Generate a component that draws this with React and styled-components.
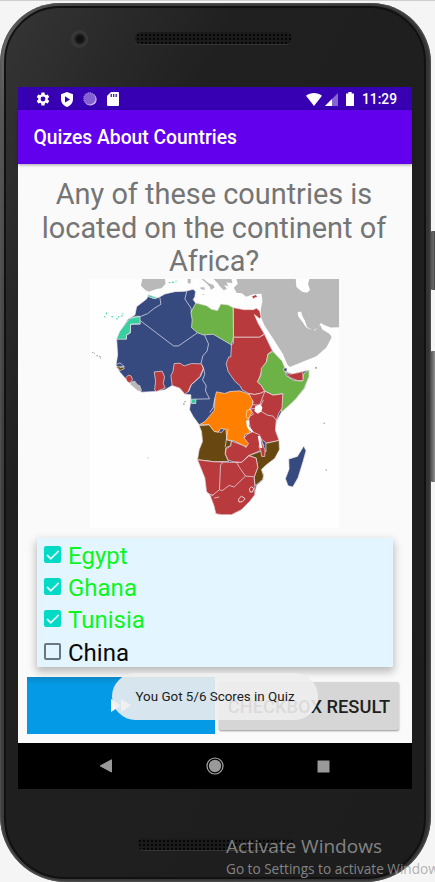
import React from "react";
import styled, { createGlobalStyle } from "styled-components";

const Global = createGlobalStyle`
  * { box-sizing: border-box; }
  html, body { margin: 0; padding: 0; overflow: hidden; background: #f5f5f5; }
  body { font-family: Roboto, "Liberation Sans", sans-serif; }
  svg { display: block; }
`;

const Desktop = styled.main`
  position: relative;
  width: 435px;
  height: 882px;
  overflow: hidden;
  padding-top: 2px;
  background: #f5f5f5;
  border-top: 1px solid #cfcfcf;
`;

const Phone = styled.div`
  position: relative;
  width: 431px;
  height: 879px;
  padding: 3px 5px 3px 4px;
  border-radius: 60px 60px 66px 66px;
  background: linear-gradient(100deg, #777 0%, #555 4%, #3c3c3c 15%, #303030 100%);
  box-shadow: inset 0 0 2px 1px #555;
`;

const SideKey = styled.div`
  position: absolute;
  left: 431px;
  top: ${(p) => p.$top}px;
  width: 5px;
  height: ${(p) => p.$height}px;
  background: linear-gradient(90deg, #555, ${(p) => p.$tone} 50%, ${(p) => p.$edge});
  border-radius: 1px;
`;

const Face = styled.div`
  height: 100%;
  display: flex;
  flex-direction: column;
  padding: 0 12px;
  border: 2px solid #111;
  border-radius: 56px 56px 61px 61px;
  background: linear-gradient(115deg, #353536 0%, #2a2a2a 14%, #202020 28%, #1d1d1d 100%);
`;

const Forehead = styled.header`
  height: 79px;
  flex: none;
  display: flex;
  align-items: flex-start;
  padding: 22px 0 0 53px;
  gap: 47px;
`;

const Camera = styled.div`
  width: 18px;
  height: 18px;
  margin-left: -1px;
  border-radius: 50%;
  background: radial-gradient(circle at 55% 50%, #111 0 3px, #29252a 5px, #3b393c 7px, #333 9px);
`;

const Speaker = styled.div`
  width: 157px;
  height: 13px;
  border-radius: 7px;
  background: radial-gradient(circle, #050505 0.9px, transparent 1.2px) 1px 1px / 4px 4px, #1b1b1b;
  border-bottom: 1px solid #353535;
  flex: none;
`;

const TopSpeaker = styled(Speaker)`
  margin-top: 2px;
`;

const Screen = styled.section`
  position: relative;
  width: 394px;
  height: 702px;
  flex: none;
  display: flex;
  flex-direction: column;
  background: #fafafa;
`;

const StatusBar = styled.div`
  height: 23px;
  flex: none;
  display: flex;
  align-items: center;
  justify-content: space-between;
  padding: 1px 15px 0 17px;
  background: #3700b3;
  color: #fff;
`;

const StatusGroup = styled.div`
  display: flex;
  align-items: center;
  gap: ${(p) => p.$gap}px;
`;

const Battery = styled.div`
  margin-left: 5px;
`;

const Clock = styled.time`
  font-size: 13.8px;
  font-weight: 500;
  margin-left: 5px;
  line-height: 20px;
`;

const AppBar = styled.h1`
  margin: 0;
  height: 54px;
  flex: none;
  padding-left: 15.5px;
  font-size: 19.3px;
  font-weight: 500;
  line-height: 55px;
  color: #fff;
  background: #6200ee;
  box-shadow: 0 1px 3px rgba(0, 0, 0, 0.35);
`;

const Content = styled.div`
  height: 579px;
  flex: none;
  display: flex;
  flex-direction: column;
  padding: 14px 13px 0 9px;
`;

const Question = styled.h2`
  margin: 0 0 0 2px;
  height: 101px;
  text-align: center;
  font-size: 28.9px;
  font-weight: 400;
  line-height: 33.5px;
  color: #757575;
  white-space: nowrap;
`;

const MapFrame = styled.figure`
  margin: 0 0 0 63px;
  width: 249px;
  height: 249px;
  background: #fefefe;
`;

const Options = styled.div`
  margin: 10px 6px 0 10px;
  height: 129px;
  flex: none;
  border-radius: 1px;
  background: #e3f5ff;
  box-shadow: 0 4px 9px 1px rgba(0, 0, 0, 0.26);
`;

const Option = styled.label`
  display: flex;
  align-items: center;
  gap: 7px;
  height: 32.2px;
  padding: 4px 0 0 7px;
  font-size: 24px;
  line-height: 28px;
  color: ${(p) => (p.$right ? "#0cf51c" : "#080808")};
`;

const Tick = styled.span`
  width: 17px;
  height: 17px;
  margin-top: -3px;
  border-radius: 2px;
  border: 2px solid ${(p) => (p.$on ? "#03dac5" : "#6b7780")};
  background: ${(p) => (p.$on ? "#03dac5" : "transparent")};
  display: grid;
  place-items: center;
`;

const Actions = styled.div`
  display: flex;
  align-items: flex-start;
  margin-top: 10px;
  gap: 4px;
`;

const NextButton = styled.button`
  width: 188px;
  height: 57px;
  border: 0;
  padding: 0;
  display: grid;
  place-items: center;
  background: linear-gradient(#0c87c7 0, #049ae6 7px);
`;

const ResultButton = styled.button`
  width: 180px;
  height: 48px;
  margin-top: 5px;
  padding: 0;
  border: 0;
  border-radius: 2px;
  font: 500 18.3px Roboto, sans-serif;
  line-height: 49px;
  color: #1f1f1f;
  white-space: nowrap;
  background: #d6d6d6;
  box-shadow: 0 1px 2px rgba(0, 0, 0, 0.4);
`;

const Toast = styled.div`
  position: absolute;
  left: 94px;
  top: 586px;
  width: 206px;
  height: 47px;
  border-radius: 24px;
  text-align: center;
  font-size: 13.4px;
  line-height: 48px;
  color: #202020;
  background: rgba(238, 238, 238, 0.9);
`;

const NavBar = styled.nav`
  height: 46px;
  flex: none;
  display: flex;
  align-items: center;
  justify-content: space-between;
  padding: 0 82px 0 81px;
  background: #000;
`;

const Chin = styled.footer`
  padding: 49px 0 0 119px;
`;

const Watermark = styled.aside`
  position: absolute;
  left: 226px;
  top: 833px;
  white-space: nowrap;
  color: rgba(160, 160, 160, 0.8);
  font-family: "Open Sans", "Noto Sans", sans-serif;
`;

const WatermarkTitle = styled.div`
  font-size: 19px;
  line-height: 25px;
`;

const WatermarkText = styled.div`
  font-size: 13.6px;
  line-height: 20px;
`;

const NAVY = "#364a80";
const RED = "#b93a3c";
const GREEN = "#6cb247";
const BROWN = "#684711";
const ORANGE = "#ff7f00";
const MINT = "#35cfa0";
const GREY = "#b9b9b9";

const regions = [
  [GREY, "M172 12L168 32L181 45L192 50L215 42L230 40L242 26L240 12Z"],
  [GREY, "M308 12L318 12L317 26L309 24Z M344 38L358 36L360 45L350 43Z M356 12L372 25L386 30L389 38L378 44L375 36L365 25L350 12Z"],
  [GREY, "M386 12L398 24L405 34L417 46L426 42L418 30L430 34L425 22L443 25L440 12Z"],
  [GREY, "M455 12L763 12L763 157L738 158L720 151L708 144L702 157L686 166L667 156L661 138L653 123L649 110L639 112L640 124L654 142L663 156L669 160L690 167L707 151L713 164L735 177L741 187L725 218L695 244L615 276L607 268L595 238L565 191L540 153L529 128L528 103L533 79L530 56L506 58L484 65L470 54L456 54L447 38L459 26Z"],
  [NAVY, "M190 62L204 70L220 68L240 57L270 50L300 49L325 43L332 50L330 65L325 74L333 85L345 87L365 92L380 103L398 107L408 88L430 90L445 98L478 104L500 104L505 120L520 145L540 178L555 210L565 230L590 262L600 282L608 292L622 297L654 290L673 285L672 305L660 340L635 370L615 390L590 412L575 440L572 465L582 497L584 525L565 550L540 570L530 585L537 600L535 615L515 633L510 660L495 680L470 705L440 720L410 720L393 717L388 695L375 660L365 650L360 610L338 555L343 525L353 500L350 470L343 450L325 425L314 405L318 375L318 360L300 358L285 340L262 332L240 345L210 350L170 352L150 335L125 315L105 292L93 270L98 240L95 192L105 170L130 132L150 120L155 95L185 72Z"],
  [GREEN, "M333 84L345 87L365 92L380 103L398 107L408 87L430 90L445 98L446 185L440 210L385 178L355 180L337 173L320 158L322 135L318 112Z"],
  [RED, "M446 98L478 104L505 104L515 100L525 108L529 127L524 131L509 119L520 145L539 178L532 181L524 187L446 187Z"],
  [RED, "M446 187L524 187L539 178L563 228L550 237L545 261L533 282L523 310L518 321L530 332L540 349L528 355L510 359L492 356L472 345L466 333L450 319L430 290L424 266L432 246L438 246L440 210L446 205Z"],
  [GREEN, "M565 230L592 258L602 282L604 302L625 316L652 319L658 295L673 285L673 305L658 340L635 370L615 390L590 412L590 382L594 356L565 361L539 348L530 332L518 321L528 303L530 280L545 261L550 237Z"],
  [RED, "M602 290L615 298L633 295L654 290L655 317L638 317L613 307Z"],
  [RED, "M262 332L258 302L264 291L268 266L285 265L298 273L320 266L350 267L356 280L345 305L331 319L318 330L312 349L300 358L285 340Z"],
  [RED, "M208 291L232 289L239 306L235 326L241 339L215 350L209 345L212 320Z M122 309L130 301L138 303L143 313L135 325L126 319Z"],
  [GREY, "M140 319L150 318L158 328L166 332L172 350L158 347L145 336L136 328Z"],
  [BROWN, "M94 276L115 275L118 281L106 287Z"],
  [MINT, "M135 130L155 124L165 124L166 147L137 148L136 174L125 180L124 193L95 193L104 170Z M188 58L208 65L217 68L210 71L192 66Z M320 373L333 373L333 386L320 386Z"],
  [BROWN, "M343 453L373 450L390 470L411 473L421 460L432 461L426 495L440 499L438 512L423 519L421 537L431 560L385 561L370 558L338 555L343 525L353 500L350 470Z"],
  [ORANGE, "M390 370L395 351L420 356L435 350L465 348L492 358L503 370L504 390L494 402L490 435L489 455L496 475L481 478L478 489L492 505L490 518L475 512L450 499L426 495L423 463L408 461L400 472L388 470L372 449L343 450L360 440L373 425L388 407Z"],
  [RED, "M492 356L510 359L528 355L540 349L565 361L594 357L592 400L582 415L574 440L572 467L583 497L545 505L526 490L510 480L498 467L492 435L497 404L506 382Z"],
  [RED, "M488 478L503 471L524 480L529 496L537 512L526 528L495 541L470 563L445 561L430 556L422 538L424 522L438 513L440 499L475 512L484 518L491 506L478 490Z"],
  [BROWN, "M524 531L544 530L543 506L583 497L584 525L570 551L545 570L530 584L536 604L533 615L511 633L508 607L519 578L514 550L492 543Z"],
  [RED, "M527 488L533 508L541 526L540 545L531 545L528 528L523 517Z"],
  [RED, "M338 555L385 561L445 563L470 563L492 543L514 550L519 578L508 607L510 633L510 660L495 680L470 705L440 720L410 720L393 717L388 695L375 660L365 650L360 610Z"],
  [NAVY, "M657 514L664 528L655 560L640 609L624 637L610 633L602 612L613 583L612 553L638 545Z M597 280L607 279L606 290L597 289Z"],
  [RED, "M501 64L513 59L518 65L505 71Z"],
];

const borders =
  "M225 68L228 88L208 100L188 116L166 125 M166 137L266 213L281 213L337 174 M306 48L300 72L318 99L320 112 M359 180L371 207L367 228L354 243L348 267 M356 280L360 298L353 315L364 332L362 348L374 372L332 373 M352 271L356 282L347 305L320 329L310 350 M166 125L135 130 M166 147L137 148L136 174L125 180L124 193 M504 390L525 390L540 350 M496 403L525 398L536 375 M528 409L548 421L565 424L577 439 M497 404L506 418L493 426 M415 562L407 571L404 645L380 664 M385 662L365 655 M404 645L412 648L433 632L448 637L482 604L507 606 M455 562L462 575L482 604 M492 543L470 563 M388 670L403 667 M421 517L430 461 M375 413L385 398L390 370 M94 269L105 264L118 275L104 279";

const specks =
  "M57 124h4v3h-4z M63 113h3v5h-3z M79 124h6v3h-6z M94 130h4v4h-4z M99 124h4v4h-4z M109 121h4v4h-4z M112 115h3v3h-3z M252 21h4v3h-4z M260 20h8v3h-8z M272 17h3v3h-3z";

const darkSpecks =
  "M22 232h3v2h-3z M28 235h2v2h-2z M35 241h3v3h-3z M42 243h5v2h-5z M45 248h2v3h-2z M717 444h3v3h-3z M723 584h3v3h-3z M692 277h4v4h-4z M354 57h2v2h-2z M299 379h3v3h-3z M295 386h4v3h-4z";

function AfricaMap() {
  return (
    <svg width="249" height="249" viewBox="15 12 748 748" role="img" aria-label="Map of Africa">
      {regions.map(([fill, d], i) => (
        <path
          key={i}
          d={d}
          fill={fill}
          stroke={fill === GREY ? "none" : "#f4e9ea"}
          strokeWidth="2"
          strokeLinejoin="round"
        />
      ))}
      <path d={borders} fill="none" stroke="#e2dfea" strokeWidth="2.2" strokeLinejoin="round" />
      <path d="M633 12L674 12L670 27L676 45L667 53L652 50L635 36Z" fill="#fefefe" />
      <path d="M511 394L527 388L533 398L530 410L519 417L509 409Z M484 437L493 436L493 454L506 470L500 473L486 456Z M519 484L526 484L529 504L533 520L525 519Z" fill="#fefefe" />
      <path d="M486 407L498 404L500 416L491 431L484 427Z" fill={ORANGE} stroke="#fff" strokeWidth="1.6" />
      <path d="M461 674L470 664L481 672L472 681L463 682Z M494 642L500 636L507 641L503 652L496 652Z" fill={RED} stroke="#fff" strokeWidth="2.4" />
      <path d={specks} fill={MINT} />
      <path d={darkSpecks} fill="#665650" />
      <circle cx="189" cy="549" r="3" fill="#ddd" />
    </svg>
  );
}

const GearIcon = () => (
  <svg width="16" height="16" viewBox="0 0 24 24" fill="#fff">
    <path d="M19.14 12.94c.04-.3.06-.61.06-.94 0-.32-.02-.64-.07-.94l2.03-1.58c.18-.14.23-.41.12-.61l-1.92-3.32c-.12-.22-.37-.29-.59-.22l-2.39.96c-.5-.38-1.03-.7-1.62-.94L14.4 2.81c-.04-.24-.24-.41-.48-.41h-3.84c-.24 0-.43.17-.47.41L9.25 5.35c-.59.24-1.13.57-1.62.94L5.24 5.33c-.22-.08-.47 0-.59.22L2.74 8.87c-.12.21-.08.47.12.61l2.03 1.58c-.05.3-.09.63-.09.94s.02.64.07.94l-2.03 1.58c-.18.14-.23.41-.12.61l1.92 3.32c.12.22.37.29.59.22l2.39-.96c.5.38 1.03.7 1.62.94l.36 2.54c.05.24.24.41.48.41h3.84c.24 0 .44-.17.47-.41l.36-2.54c.59-.24 1.13-.56 1.62-.94l2.39.96c.22.08.47 0 .59-.22l1.92-3.32c.12-.22.07-.47-.12-.61l-2.01-1.58zM12 15.6A3.6 3.6 0 1 1 12 8.4a3.6 3.6 0 0 1 0 7.2z" />
  </svg>
);

const ShieldIcon = () => (
  <svg width="12" height="15" viewBox="0 0 12 15">
    <path d="M6 0L12 2.2V7C12 11 9.3 13.8 6 15C2.7 13.8 0 11 0 7V2.2Z" fill="#fff" />
    <path d="M4 4.3L9 7.4L4 10.5Z" fill="#3700b3" />
  </svg>
);

const SyncIcon = () => (
  <svg width="14" height="14" viewBox="0 0 14 14">
    <circle cx="7.4" cy="7.4" r="6.2" fill="#d8c9f5" />
    <circle cx="6.6" cy="6.6" r="6" fill="#8460d2" stroke="#a58be0" strokeDasharray="1 1" />
  </svg>
);

const CardIcon = () => (
  <svg width="12" height="14" viewBox="0 0 12 14">
    <path d="M4 0H11Q12 0 12 1V13Q12 14 11 14H1Q0 14 0 13V4Z" fill="#fff" />
    <path d="M4.2 2V5M6.7 2V5M9.2 2V5" stroke="#3700b3" strokeWidth="1.2" />
  </svg>
);

const WifiIcon = () => (
  <svg width="16" height="13" viewBox="0 0 16 13">
    <path d="M0 2.8C4.7 -.9 11.3 -.9 16 2.8L8 13Z" fill="#fff" />
  </svg>
);

const SignalIcon = () => (
  <svg width="13" height="13" viewBox="0 0 13 13">
    <path d="M13 0V13H0Z" fill="#8765d1" />
    <path d="M7 6V13H0Z" fill="#fff" />
  </svg>
);

const BatteryIcon = () => (
  <svg width="8" height="14" viewBox="0 0 8 14">
    <path d="M2.3 0H5.7V1.4H8V14H0V1.4H2.3Z" fill="#fff" />
  </svg>
);

const CheckMark = () => (
  <svg width="14" height="12" viewBox="0 0 14 12">
    <path d="M1 6L4.8 9.8L12.7 1.8" fill="none" stroke="#e5faff" strokeWidth="1.8" />
  </svg>
);

const ForwardIcon = () => (
  <svg width="20" height="13" viewBox="0 0 20 13">
    <path d="M0 0L10 6.5L0 13Z M10 0L20 6.5L10 13Z" fill="#fff" />
  </svg>
);

const BackIcon = () => (
  <svg width="14" height="14" viewBox="0 0 14 14">
    <path d="M12.5 .8V13L1.2 6.9Z" fill="#999" stroke="#999" strokeLinejoin="round" />
  </svg>
);

const HomeIcon = () => (
  <svg width="18" height="18" viewBox="0 0 18 18">
    <circle cx="9" cy="9" r="8" fill="none" stroke="#aaa" strokeWidth="1.2" />
    <circle cx="9" cy="9" r="6.2" fill="#999" />
  </svg>
);

const RecentIcon = () => (
  <svg width="13" height="13" viewBox="0 0 13 13">
    <rect x=".5" y=".5" width="12" height="12" rx=".5" fill="#999" />
  </svg>
);

const answers = [
  { name: "Egypt", on: true },
  { name: "Ghana", on: true },
  { name: "Tunisia", on: true },
  { name: "China", on: false },
];

export default function App() {
  return (
    <>
      <Global />
      <Desktop>
        <SideKey $top={230} $height={59} $tone="#666" $edge="#222" />
        <SideKey $top={350} $height={131} $tone="#777" $edge="#aaa" />
        <Phone>
          <Face>
            <Forehead>
              <Camera />
              <TopSpeaker />
            </Forehead>
            <Screen>
              <StatusBar>
                <StatusGroup $gap={10}>
                  <GearIcon />
                  <ShieldIcon />
                  <SyncIcon />
                  <CardIcon />
                </StatusGroup>
                <StatusGroup $gap={3}>
                  <WifiIcon />
                  <SignalIcon />
                  <Battery>
                    <BatteryIcon />
                  </Battery>
                  <Clock>11:29</Clock>
                </StatusGroup>
              </StatusBar>
              <AppBar>Quizes About Countries</AppBar>
              <Content>
                <Question>
                  Any of these countries is
                  <br />
                  located on the continent of
                  <br />
                  Africa?
                </Question>
                <MapFrame>
                  <AfricaMap />
                </MapFrame>
                <Options>
                  {answers.map((a) => (
                    <Option key={a.name} $right={a.on}>
                      <Tick $on={a.on}>{a.on && <CheckMark />}</Tick>
                      {a.name}
                    </Option>
                  ))}
                </Options>
                <Actions>
                  <NextButton aria-label="Next">
                    <ForwardIcon />
                  </NextButton>
                  <ResultButton>CHECKBOX RESULT</ResultButton>
                </Actions>
              </Content>
              <NavBar>
                <BackIcon />
                <HomeIcon />
                <RecentIcon />
              </NavBar>
              <Toast>You Got 5/6 Scores in Quiz</Toast>
            </Screen>
            <Chin>
              <Speaker />
            </Chin>
          </Face>
        </Phone>
        <Watermark>
          <WatermarkTitle>Activate Windows</WatermarkTitle>
          <WatermarkText>Go to Settings to activate Windows.</WatermarkText>
        </Watermark>
      </Desktop>
    </>
  );
}
